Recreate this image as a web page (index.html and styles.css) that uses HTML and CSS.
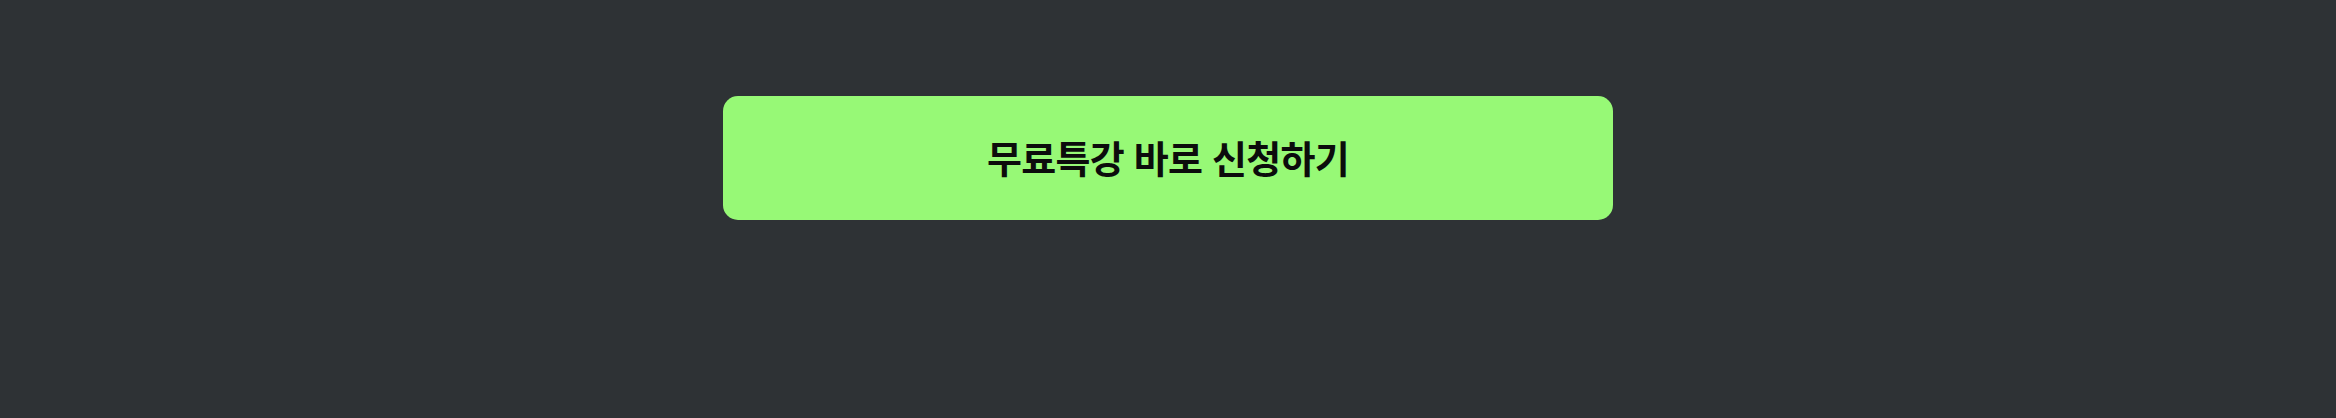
FILE: index.html
```html
<!DOCTYPE html>
<html lang="ko">
<head>
<meta charset="utf-8">
<link rel="stylesheet" href="styles.css">
</head>
<body>
<main class="page">
  <a class="cta" href="#">무료특강 바로 신청하기</a>
</main>
</body>
</html>
```

FILE: styles.css
```css
html, body {
  margin: 0;
  padding: 0;
  background: #2e3235;
}
.page {
  width: 2336px;
  height: 418px;
  display: flex;
  justify-content: center;
  align-items: flex-start;
  padding-top: 96px;
  box-sizing: border-box;
}
.cta {
  width: 890px;
  height: 124px;
  border-radius: 15px;
  background: #97f976;
  display: flex;
  align-items: center;
  justify-content: center;
  padding-bottom: 4px;
  box-sizing: border-box;
  color: #0c0c0c;
  text-decoration: none;
  font-family: "Noto Sans CJK KR", "Noto Sans", sans-serif;
  font-weight: 700;
  font-size: 38px;
  letter-spacing: -0.02em;
}
```
